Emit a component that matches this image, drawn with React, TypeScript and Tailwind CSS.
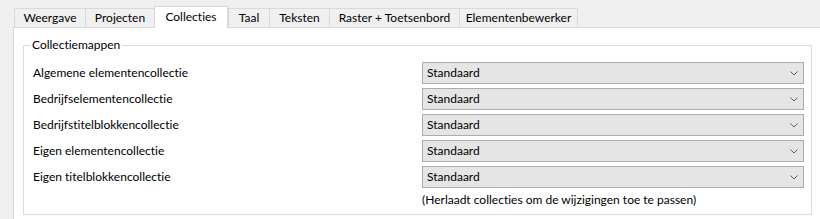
const tabs = [
  { label: "Weergave", w: "w-[71px]" },
  { label: "Projecten", w: "w-[69px]" },
  { label: "Collecties", w: "w-[74px]", active: true },
  { label: "Taal", w: "w-[41px]" },
  { label: "Teksten", w: "w-[60px]" },
  { label: "Raster + Toetsenbord", w: "w-[130px]" },
  { label: "Elementenbewerker", w: "w-[119px]", last: true },
];

const rows = [
  "Algemene elementencollectie",
  "Bedrijfselementencollectie",
  "Bedrijfstitelblokkencollectie",
  "Eigen elementencollectie",
  "Eigen titelblokkencollectie",
];

function Combo() {
  return (
    <div className="h-[22px] border border-[#adadad] bg-[#e5e5e5] flex items-center justify-between pl-[4px] pr-[5px]">
      <span>Standaard</span>
      <svg width="8" height="5" viewBox="0 0 8 5" fill="none">
        <path d="M0.5 0.5 L4 4 L7.5 0.5" stroke="#606060" strokeWidth="1" />
      </svg>
    </div>
  );
}

export default function App() {
  return (
    <div className="w-[820px] h-[219px] bg-[#f0f0f0] flex flex-col overflow-hidden text-[12px] leading-[16px] text-black font-['Lato',sans-serif] [font-variant-ligatures:none]">
      <div className="h-[27px] flex items-end pl-[14px] shrink-0">
        {tabs.map((t) =>
          t.active ? (
            <div
              key={t.label}
              className={`${t.w} h-[22px] -mb-px relative z-10 bg-white border-l border-t border-r border-[#d9d9d9] flex items-center justify-center pb-[2px]`}
            >
              {t.label}
            </div>
          ) : (
            <div
              key={t.label}
              className={`${t.w} h-[19px] border-l border-t ${t.last ? "border-r" : ""} border-[#d9d9d9] flex items-center justify-center`}
            >
              {t.label}
            </div>
          )
        )}
      </div>
      <div className="flex-1 ml-[13px] border-l border-t border-[#d9d9d9] bg-white pl-[9px] pr-[8px]">
        <fieldset className="mt-[9px] border border-[#dcdcdc] pl-[9px] pr-[7px] pt-[9px] pb-[6px]">
          <legend className="-ml-[3px] px-[2px]">Collectiemappen</legend>
          <div className="flex flex-col gap-[4px]">
            {rows.map((r) => (
              <div key={r} className="grid grid-cols-[389px_1fr] items-center">
                <span>{r}</span>
                <Combo />
              </div>
            ))}
            <div className="grid grid-cols-[389px_1fr] items-center">
              <span />
              <span>(Herlaadt collecties om de wijzigingen toe te passen)</span>
            </div>
          </div>
        </fieldset>
      </div>
    </div>
  );
}
